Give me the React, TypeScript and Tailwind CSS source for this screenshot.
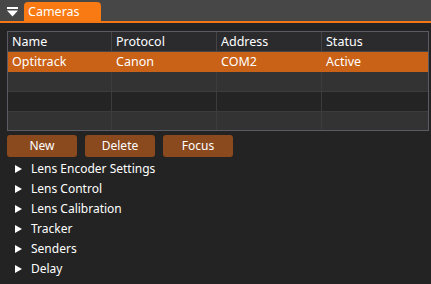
import { ReactNode } from "react";

const columns = ["Name", "Protocol", "Address", "Status"];

const rows: string[][] = [
  ["Optitrack", "Canon", "COM2", "Active"],
  ["", "", "", ""],
  ["", "", "", ""],
  ["", "", "", ""],
];

const sections = [
  "Lens Encoder Settings",
  "Lens Control",
  "Lens Calibration",
  "Tracker",
  "Senders",
  "Delay",
];

const CollapseIcon = () => (
  <svg width="11" height="11" viewBox="0 0 11 11" className="block">
    <rect x="0" y="1" width="11" height="2" fill="#ffffff" />
    <polygon points="0,4.5 11,4.5 5.5,10.5" fill="#ffffff" />
  </svg>
);

const Arrow = () => (
  <svg width="7" height="8" viewBox="0 0 7 8" className="block">
    <polygon points="0,0 7,4 0,8" fill="#ffffff" />
  </svg>
);

const ActionButton = ({ children }: { children: ReactNode }) => (
  <button className="w-[70px] h-[22px] rounded-[3px] bg-[#8a4a1e] text-[12px] text-white leading-none">
    {children}
  </button>
);

const App = () => {
  return (
    <div
      className="w-[431px] h-[284px] bg-[#232323] text-white overflow-hidden"
      style={{ fontFamily: '"Noto Sans", "Open Sans", sans-serif' }}
    >
      <div className="h-[21px] bg-[#474747] flex items-end">
        <div className="w-[24px] h-[21px] flex items-center justify-center pl-[1px] pt-[1px]">
          <CollapseIcon />
        </div>
        <div className="w-[77px] h-[19px] bg-[#f97a12] rounded-t-[4px] pl-[4px] text-[12.5px] leading-[19px]">
          Cameras
        </div>
      </div>
      <div className="h-[2px] bg-[#f57614]" />

      <div className="pt-[8px] px-[7px] pr-[2px]">
        <div className="border border-[#5b5b63]">
          <div className="grid grid-cols-[104px_105px_105px_1fr] h-[20px] bg-[#2b2b2e] border-b border-[#454548]">
            {columns.map((c, i) => (
              <div
                key={c}
                className={`px-[4px] text-[12.5px] leading-[19px] ${i < 3 ? "border-r border-[#454548]" : ""}`}
              >
                {c}
              </div>
            ))}
          </div>
          {rows.map((r, ri) => (
            <div
              key={ri}
              className={`grid grid-cols-[104px_105px_105px_1fr] ${
                ri === 0
                  ? "bg-[#c96116] h-[20px]"
                  : ri % 2 === 1
                    ? "bg-[#333333] border-b border-[#3c3c3c] h-[20px]"
                    : "bg-[#242424] border-b border-[#3c3c3c] h-[20px]"
              } ${ri === rows.length - 1 ? "border-b-0 !h-[18px]" : ""}`}
            >
              {r.map((cell, ci) => (
                <div
                  key={ci}
                  className={`px-[4px] text-[12.5px] leading-[20px] ${
                    ci < 3 && ri > 0 ? "border-r border-[#3c3c3c]" : ""
                  }`}
                >
                  {cell}
                </div>
              ))}
            </div>
          ))}
        </div>
      </div>

      <div className="flex gap-[8px] px-[7px] pt-[4px]">
        <ActionButton>New</ActionButton>
        <ActionButton>Delete</ActionButton>
        <ActionButton>Focus</ActionButton>
      </div>

      <div className="pt-[2px]">
        {sections.map((s) => (
          <div key={s} className="h-[20px] flex items-center pl-[15px]">
            <Arrow />
            <span className="pl-[9px] text-[12px] leading-[20px]">{s}</span>
          </div>
        ))}
      </div>
    </div>
  );
};

export default App;
